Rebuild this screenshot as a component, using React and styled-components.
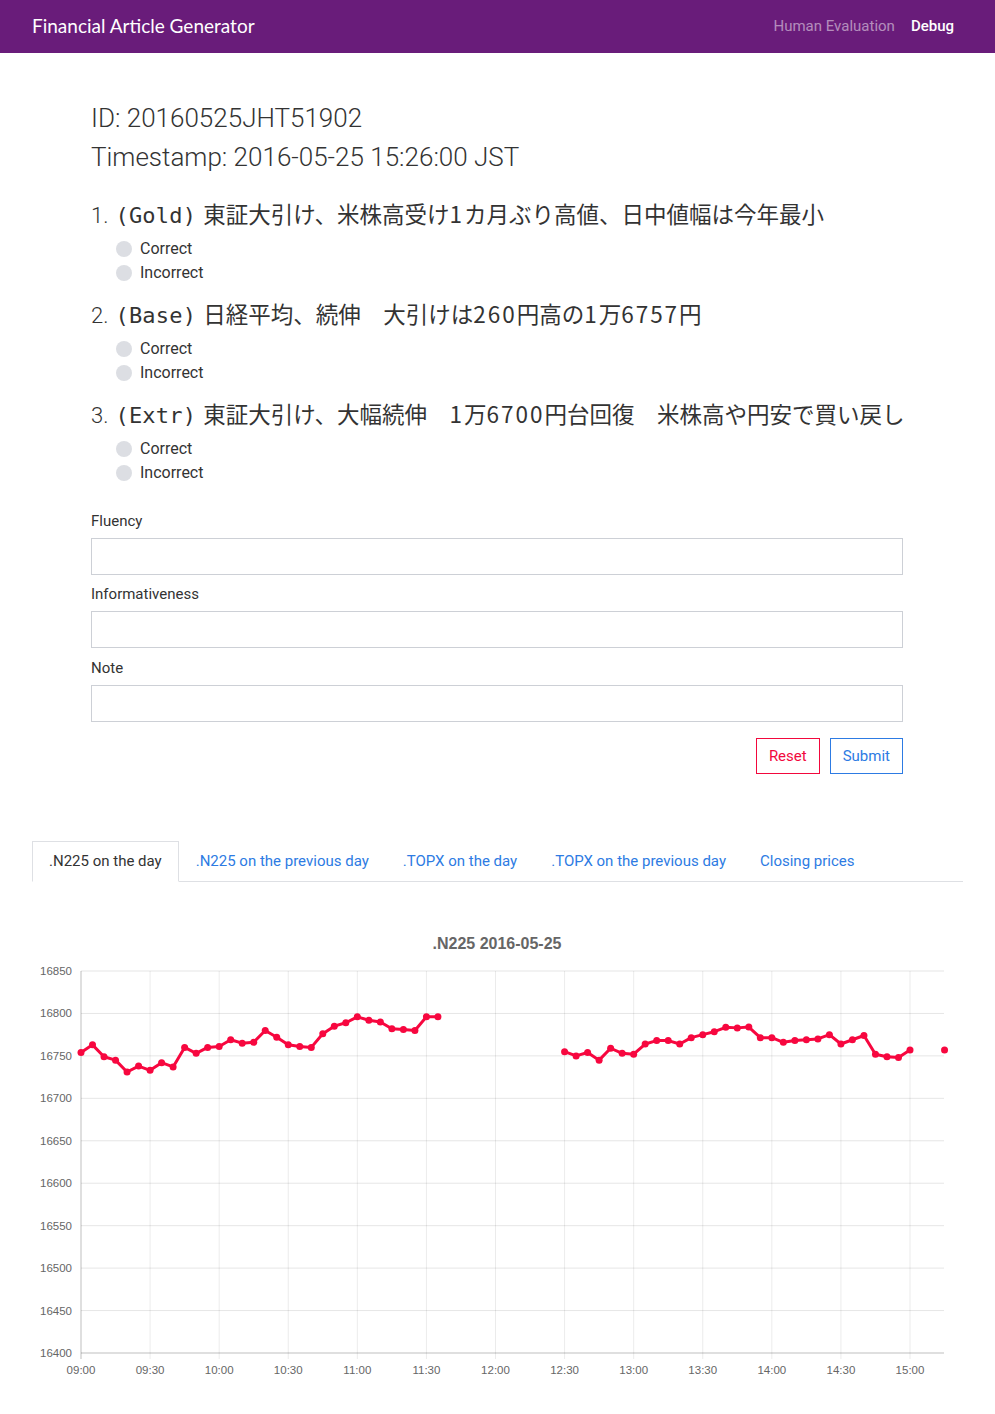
import React from "react";
import styled, { createGlobalStyle } from "styled-components";

const GlobalStyle = createGlobalStyle`
  body {
    margin: 0;
    background: #fff;
    font-family: Roboto, "Noto Sans CJK JP", sans-serif;
    color: #333;
  }
`;

const NavBar = styled.nav`
  height: 53px;
  background: #691c7a;
  display: flex;
  align-items: center;
  justify-content: space-between;
  padding: 0 41px 0 32px;
`;

const Brand = styled.div`
  font-family: Lato, sans-serif;
  font-size: 19px;
  color: #fff;
  margin-top: -2px;
`;

const NavLinks = styled.div`
  display: flex;
  gap: 16px;
  margin-top: -1px;
`;

const NavLink = styled.a`
  font-size: 15px;
  font-weight: ${(p) => (p.active ? 500 : 400)};
  color: ${(p) => (p.active ? "#fff" : "rgba(255,255,255,0.5)")};
  text-decoration: none;
`;

const Container = styled.main`
  margin: 0 92px 0 91px;
  padding-top: 46px;
`;

const Info = styled.div`
  font-size: 26px;
  font-weight: 300;
  line-height: 39px;
  color: #333;
`;

const Question = styled.section`
  margin-top: ${(p) => (p.first ? "20px" : "12.5px")};
`;

const QuestionTitle = styled.h3`
  margin: 0 0 6.5px;
  height: 33px;
  display: flex;
  align-items: baseline;
  gap: 7px;
  font-size: 22px;
  font-weight: 300;
  white-space: nowrap;
  color: #333;

  & > span {
    line-height: 33px;
    height: 33px;
  }
`;

const Number = styled.span`
  font-family: Roboto, sans-serif;
  font-weight: 300;
`;

const Kind = styled.span`
  font-family: "DejaVu Sans Mono", monospace;
  font-size: 22px;
  font-weight: 400;
  letter-spacing: 0.2px;
`;

const Headline = styled.span`
  font-family: "Noto Sans CJK JP", sans-serif;
  font-size: 22.5px;
  font-weight: 400;
  color: #333;
`;

const Digits = styled.span`
  letter-spacing: 2px;
`;

const Option = styled.label`
  display: flex;
  align-items: center;
  height: 24px;
  padding-left: 25px;
  font-size: 16px;
  color: #333;
`;

const Radio = styled.span`
  width: 16px;
  height: 16px;
  border-radius: 50%;
  background: #dcdee3;
  margin-right: 8px;
`;

const Field = styled.div`
  margin-top: ${(p) => (p.first ? "25px" : "8.5px")};
`;

const Label = styled.div`
  font-size: 15px;
  line-height: 22px;
  margin-bottom: 6px;
  color: #333;
`;

const Input = styled.div`
  height: 35px;
  border: 1px solid #cdd0d6;
`;

const Actions = styled.div`
  display: flex;
  justify-content: flex-end;
  gap: 10px;
  margin-top: 16px;
`;

const Button = styled.button`
  height: 36px;
  padding: 0 12px;
  background: #fff;
  border: 1px solid ${(p) => p.color};
  color: ${(p) => p.color};
  font-family: Roboto, sans-serif;
  font-size: 15px;
  border-radius: 0;
`;

const Tabs = styled.div`
  display: flex;
  margin: 67px 32px 0 32px;
  border-bottom: 1px solid #dee0e4;
`;

const Tab = styled.div`
  height: 39px;
  display: flex;
  align-items: center;
  padding: 0 16px;
  font-size: 15px;
  color: ${(p) => (p.active ? "#333" : "#2d7be3")};
  border: 1px solid ${(p) => (p.active ? "#dee0e4" : "transparent")};
  border-bottom: ${(p) => (p.active ? "1px solid #fff" : "none")};
  margin-bottom: -1px;
  background: #fff;
`;

const ChartWrap = styled.div`
  margin: 38px 32px 0 32px;
  height: 495px;
`;

const RED = "#f7073f";
const MORNING = [16754, 16763, 16749, 16745, 16731, 16738, 16733, 16742, 16737, 16760, 16753, 16760, 16761, 16769, 16765, 16766, 16780, 16772, 16763, 16761, 16760, 16776, 16785, 16789, 16796, 16792, 16790, 16782, 16781, 16780, 16796, 16796];
const AFTERNOON = [16755, 16750, 16754, 16745, 16759, 16753, 16752, 16764, 16768, 16768, 16764, 16771.5, 16775, 16778.5, 16783.6, 16783, 16784, 16771.5, 16771.5, 16766, 16768, 16769, 16770, 16775, 16764, 16769, 16774, 16752, 16749, 16748, 16757];

const left = 49;
const right = 912;
const top = 51;
const bottom = 433;
const xOf = (min) => left + min * ((878 - 49) / 360);
const yOf = (v) => top + ((16850 - v) * (bottom - top)) / 450;

const Chart = () => {
  const yTicks = [];
  for (let v = 16850; v >= 16400; v -= 50) yTicks.push(v);
  const xTicks = [];
  for (let m = 0; m <= 360; m += 30) xTicks.push(m);
  const label = (m) => {
    const h = 9 + Math.floor(m / 60);
    const mm = m % 60;
    return `${String(h).padStart(2, "0")}:${String(mm).padStart(2, "0")}`;
  };
  const series = [
    MORNING.map((v, i) => [xOf(i * 5), yOf(v)]),
    AFTERNOON.map((v, i) => [xOf(210 + i * 5), yOf(v)]),
    [[xOf(375), yOf(16757)]],
  ];
  return (
    <svg width="930" height="470" viewBox="0 0 930 470">
      <text x="465" y="29" textAnchor="middle" fontFamily="'Liberation Sans', Arial, sans-serif" fontSize="16" fontWeight="bold" fill="#666">
        .N225 2016-05-25
      </text>
      {yTicks.map((v) => (
        <g key={v}>
          <line x1={left} x2={right} y1={yOf(v)} y2={yOf(v)} stroke={v === 16400 ? "rgba(0,0,0,0.25)" : "rgba(0,0,0,0.1)"} />
          <text x="40" y={yOf(v) + 4} textAnchor="end" fontFamily="'Liberation Sans', Arial, sans-serif" fontSize="11.5" fill="#666">
            {v}
          </text>
        </g>
      ))}
      {xTicks.map((m) => (
        <g key={m}>
          <line x1={xOf(m)} x2={xOf(m)} y1={top} y2={bottom + 6} stroke={m === 0 ? "rgba(0,0,0,0.25)" : "rgba(0,0,0,0.08)"} />
          <text x={xOf(m)} y="454" textAnchor="middle" fontFamily="'Liberation Sans', Arial, sans-serif" fontSize="11.5" fill="#666">
            {label(m)}
          </text>
        </g>
      ))}
      {series.map((pts, si) => (
        <g key={si}>
          {pts.length > 1 && (
            <polyline points={pts.map((p) => p.join(",")).join(" ")} fill="none" stroke={RED} strokeWidth="3" strokeLinejoin="round" />
          )}
          {pts.map((p, i) => (
            <circle key={i} cx={p[0]} cy={p[1]} r="3.5" fill={RED} />
          ))}
        </g>
      ))}
    </svg>
  );
};

const QUESTIONS = [
  { kind: "(Gold)", text: "東証大引け、米株高受け1カ月ぶり高値、日中値幅は今年最小" },
  { kind: "(Base)", text: "日経平均、続伸　大引けは260円高の1万6757円" },
  { kind: "(Extr)", text: "東証大引け、大幅続伸　1万6700円台回復　米株高や円安で買い戻し" },
];

const TABS = [".N225 on the day", ".N225 on the previous day", ".TOPX on the day", ".TOPX on the previous day", "Closing prices"];

const withDigits = (text) =>
  text.split(/(\d+)/).map((part, i) => (/^\d+$/.test(part) ? <Digits key={i}>{part}</Digits> : part));

export default function App() {
  return (
    <>
      <GlobalStyle />
      <NavBar>
        <Brand>Financial Article Generator</Brand>
        <NavLinks>
          <NavLink>Human Evaluation</NavLink>
          <NavLink active>Debug</NavLink>
        </NavLinks>
      </NavBar>
      <Container>
        <Info>ID: 20160525JHT51902</Info>
        <Info>Timestamp: 2016-05-25 15:26:00 JST</Info>
        {QUESTIONS.map((q, i) => (
          <Question key={i} first={i === 0}>
            <QuestionTitle>
              <Number>{i + 1}.</Number>
              <Kind>{q.kind}</Kind>
              <Headline>{withDigits(q.text)}</Headline>
            </QuestionTitle>
            <Option>
              <Radio />
              Correct
            </Option>
            <Option>
              <Radio />
              Incorrect
            </Option>
          </Question>
        ))}
        {["Fluency", "Informativeness", "Note"].map((name, i) => (
          <Field key={name} first={i === 0}>
            <Label>{name}</Label>
            <Input />
          </Field>
        ))}
        <Actions>
          <Button color="#f2083d">Reset</Button>
          <Button color="#2d7be3">Submit</Button>
        </Actions>
      </Container>
      <Tabs>
        {TABS.map((t, i) => (
          <Tab key={t} active={i === 0}>
            {t}
          </Tab>
        ))}
      </Tabs>
      <ChartWrap>
        <Chart />
      </ChartWrap>
    </>
  );
}
